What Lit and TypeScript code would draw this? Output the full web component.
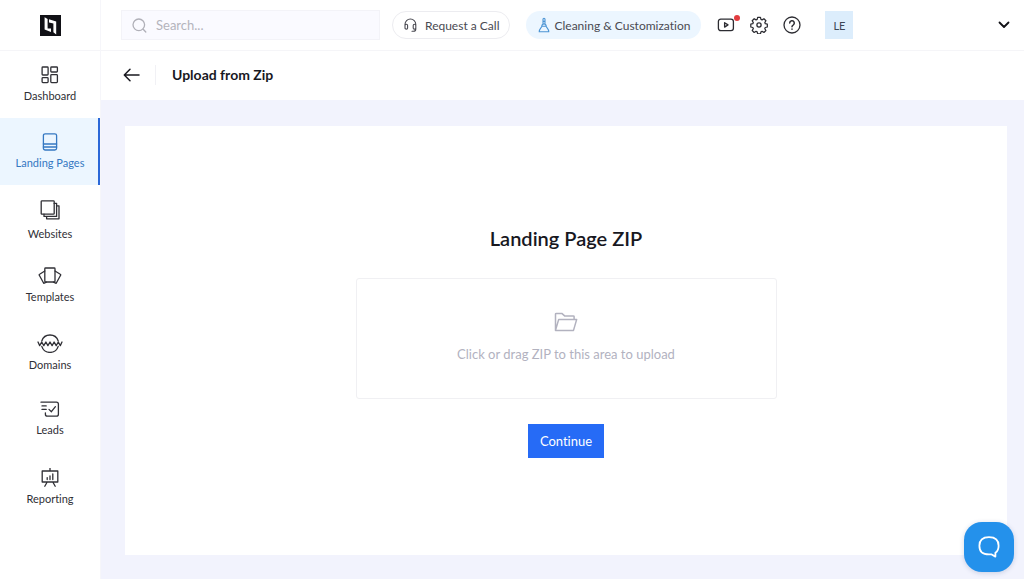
import { LitElement, html, css, svg, TemplateResult, SVGTemplateResult } from "lit";
import { customElement, property, state } from "lit/decorators.js";
import { classMap } from "lit/directives/class-map.js";

interface NavItem {
  label: string;
  width: number;
  height: number;
  art: SVGTemplateResult;
}

const NAV: NavItem[] = [
  {
    label: "Dashboard", width: 18, height: 18,
    art: svg`<rect x="1.1" y="1" width="6" height="8" rx="0.8"/><rect x="9.8" y="1" width="6.6" height="5" rx="0.8"/>
      <rect x="1.1" y="11.6" width="6" height="5" rx="0.8"/><rect x="9.8" y="8.6" width="6.6" height="8" rx="0.8"/>`,
  },
  {
    label: "Landing Pages", width: 16, height: 18,
    art: svg`<rect x="1.4" y="0.8" width="13.2" height="16.2" rx="1.8"/><path d="M1.4 11h13.2M1.4 14h13.2"/>`,
  },
  {
    label: "Websites", width: 20, height: 22,
    art: svg`<rect x="1.2" y="0.8" width="13" height="13.4" rx="0.8"/><path d="M14.2 3.4h2.4v13H4V14.2M16.6 5.8H19v13H6.6v-2.4"/>`,
  },
  {
    label: "Templates", width: 24, height: 18,
    art: svg`<rect x="6.8" y="1" width="10.2" height="14" rx="0.8"/>
      <path d="M6.8 4L1.6 7.2a.8.8 0 0 0-.3 1.1l4.4 8 2.7-1.2M17 4l5.3 3.2a.8.8 0 0 1 .3 1.1l-4.4 8-2.7-1.2"/>`,
  },
  {
    label: "Domains", width: 26, height: 19,
    art: svg`<path d="M4.800 7a8.600 8.600 0 0 1 16.400 0M4.800 12.400a8.600 8.600 0 0 0 16.400 0"/>
      <path d="M1 8l1.700 3.600L4.700 8l2.100 3.600L8.900 8l2 3.600L13 8l2.100 3.600L17.100 8l2.100 3.600L21.300 8l2 3.600L25 8"/>`,
  },
  {
    label: "Leads", width: 20, height: 17,
    art: svg`<path d="M1 1.2h15.4a2 2 0 0 1 2 2v10a2 2 0 0 1-2 2H7.4a2 2 0 0 1-2-2v-1.4M2 4.9h4.2M2 8.4h4.2M9 8.4l2.4 2.3 4-5"/>`,
  },
  {
    label: "Reporting", width: 18, height: 19,
    art: svg`<path d="M9 0v3M1.2 3h15.6v11H1.2zM6.2 14l-2.4 4.2M11.8 14l2.4 4.2"/><path d="M6.2 11.5V9.6M9 11.5V8M11.8 11.5V6"/>`,
  },
];

const icon = (width: number, height: number, art: SVGTemplateResult): TemplateResult => html`
  <svg width=${width} height=${height} viewBox="0 0 ${width} ${height}" fill="none" stroke="currentColor"
    stroke-width="1.3" stroke-linecap="round" stroke-linejoin="round" aria-hidden="true">${art}</svg>`;

@customElement("side-nav")
export class SideNav extends LitElement {
  @property() active = "";

  static styles = css`
    :host { display: block; background: #fff; border-right: 1px solid #f6f6fa; }
    .brand { display: flex; align-items: center; justify-content: center; height: 50px; border-bottom: 1px solid #f5f5f8; }
    .item {
      display: flex; flex-direction: column; align-items: center; gap: 5px;
      box-sizing: border-box; height: 67px; padding-top: 15px;
      color: #303036; font-size: 11px; line-height: 14px; text-decoration: none;
    }
    .active { background: #ecf6ff; color: #3578c2; box-shadow: inset -2px 0 #2b68d8; }
    svg { display: block; flex: none; }
  `;

  render() {
    return html`
      <div class="brand">
        <svg width="21" height="21" viewBox="0 0 21 21" aria-hidden="true">
          <path fill="#111116" d="M0 0h21v21H0z"/>
          <path fill="#fff" d="M4.600 2.200L7.600 4v9.500h3.400V17L4.600 14.600z"/>
          <path fill="#fff" d="M9 4.200l7.200 2.300v12.900l-2.800-2.200V8.400L9 7.400z"/>
        </svg>
      </div>
      <nav aria-label="Main">
        ${NAV.map((n) => html`
          <a href="#" class=${classMap({ item: true, active: n.label === this.active })}>
            ${icon(n.width, n.height, n.art)}<span>${n.label}</span>
          </a>`)}
      </nav>`;
  }
}

@customElement("top-bar")
export class TopBar extends LitElement {
  static styles = css`
    :host { display: flex; align-items: center; height: 50px; padding: 0 14px 0 20px; background: #fff; border-bottom: 1px solid #f5f5f8; }
    button { font: inherit; color: inherit; border: 0; background: none; padding: 0; margin: 0; display: flex; align-items: center; justify-content: center; cursor: pointer; }
    svg { display: block; flex: none; }
    .search {
      display: flex; align-items: center; gap: 9px; flex: 0 1 259px; min-width: 0; box-sizing: border-box;
      height: 30px; padding: 0 10px; background: #fafaff; border: 1px solid #f3f3f8; color: #b0b0b8;
    }
    .search input { flex: 1; min-width: 0; border: 0; padding: 0; outline: 0; background: none; font: inherit; font-size: 13px; color: #303036; }
    .search input::placeholder { color: #b4b4bc; opacity: 1; }
    .pill { height: 28px; box-sizing: border-box; border-radius: 14px; font-size: 12px; color: #4a4a52; white-space: nowrap; }
    .call { gap: 8px; padding: 0 10px 0 11px; margin-left: 12px; border: 1px solid #ececf0; }
    .clean { gap: 4px; padding: 0 11px 0 12px; margin-left: 16px; background: #ecf6ff; }
    .clean svg { color: #4b94d4; }
    .tools { display: flex; align-items: center; gap: 15px; margin-left: 16px; color: #2c2c32; }
    .video { position: relative; }
    .dot { position: absolute; top: -3px; right: -5px; width: 6px; height: 6px; border-radius: 50%; background: #e23c3f; }
    .avatar { width: 28px; height: 28px; margin-left: 24px; background: #dcedfc; color: #3c4654; font-size: 11px; }
    .more { margin-left: auto; color: #111116; }
  `;

  render() {
    return html`
      <label class="search">
        ${icon(15, 15, svg`<circle cx="6.8" cy="6.8" r="5.8"/><path d="M11.2 11.2l2.6 2.8"/>`)}
        <input type="search" placeholder="Search..." aria-label="Search" />
      </label>
      <button class="pill call">
        ${icon(13, 14, svg`<path stroke-width="1.1" d="M1 8V6.400a5.400 5.400 0 0 1 10.800 0V8M1 7.500c0-.8.6-1.200 1.400-1.200.8 0 1.200.4 1.200 1.200v2.400c0 .8-.4 1.200-1.200 1.200C1.600 11.100 1 10.600 1 9.900zM9.200 7.500c0-.8.4-1.200 1.200-1.200s1.400.4 1.400 1.200v2.400c0 .7-.6 1.200-1.400 1.200s-1.200-.4-1.200-1.200zM11.800 10v.9c0 1.600-.8 2.300-2.400 2.300H8"/>`)}
        Request a Call
      </button>
      <button class="pill clean">
        ${icon(12, 16, svg`<path stroke-width="1.1" d="M5 7V2.200a1 1 0 0 1 2 0V7M5 4.400h2M3.800 9.200C3.800 7.600 4.400 7 6 7s2.200.6 2.200 2.200M3.800 9.200h4.400M3.800 9.200c-.2 1.600-2.300 2.200-2.600 5.500h9.600c-.3-3.300-2.400-3.900-2.600-5.500"/>`)}
        Cleaning &amp; Customization
      </button>
      <div class="tools">
        <button class="video" aria-label="Video tutorials">
          ${icon(18, 14, svg`<rect x="1.4" y="1.1" width="15" height="11.6" rx="2.4"/><path d="M7.6 4.7v4.4L11 6.9z"/>`)}
          <span class="dot"></span>
        </button>
        <button aria-label="Settings">
          ${icon(18, 18, svg`<circle cx="9" cy="9" r="2.1"/>
            <path d="M7.500 1.200h3l.5 2.200 1.200.5 2-1.200 2.100 2.100-1.200 2 .5 1.200 2.200.5v3l-2.200.5-.5 1.200 1.200 2-2.100 2.100-2-1.200-1.200.5-.5 2.200h-3L7 16.600l-1.200-.5-2 1.200-2.100-2.100 1.200-2-.5-1.200-2.200-.5v-3l2.200-.5.5-1.200-1.200-2 2.100-2.100 2 1.200L7 3.400z" transform="translate(.6 .2) scale(.94)"/>`)}
        </button>
        <button aria-label="Help">
          ${icon(18, 18, svg`<circle cx="9" cy="9" r="8"/><path stroke-width="1.5" d="M6.700 7.100a2.300 2.300 0 1 1 3.400 2c-.8.4-1.100.8-1.100 1.600M9 13.100v.1"/>`)}
        </button>
      </div>
      <button class="avatar" aria-label="Account LE">LE</button>
      <button class="more" aria-label="More">
        ${icon(12, 8, svg`<path stroke-width="1.8" d="M1.500 1.500L6 6l4.500-4.500"/>`)}
      </button>`;
  }
}

@customElement("app-root")
export class AppRoot extends LitElement {
  @state() private fileName = "";

  static styles = css`
    :host {
      display: grid; grid-template-columns: 101px minmax(0, 1fr); min-height: 100vh;
      background: #f2f3fd; font-family: Lato, "Liberation Sans", sans-serif; color: #18181f;
      font-variant-ligatures: none;
    }
    side-nav { box-sizing: border-box; }
    .page { display: flex; flex-direction: column; min-width: 0; }
    .title { display: flex; align-items: center; box-sizing: border-box; height: 49px; padding: 0 22px 2px; background: #fff; }
    .back { display: flex; border: 0; padding: 0; background: none; color: #18181f; cursor: pointer; }
    .title h1 { margin: 0 0 0 15px; padding-left: 16px; border-left: 1px solid #f1f1f5; font-size: 14px; line-height: 20px; font-weight: 700; }
    main {
      flex: 1; display: flex; flex-direction: column; align-items: center; justify-content: center;
      margin: 26px 17px 24px 24px; padding: 20px; background: #fff;
    }
    h2 { margin: 0; font-size: 20px; line-height: 28px; font-weight: 600; }
    .drop {
      display: flex; flex-direction: column; align-items: center; justify-content: center; gap: 12px;
      box-sizing: border-box; width: 100%; max-width: 421px; height: 121px; margin: 26px 0 25px;
      border: 1px solid #f0f0f3; border-radius: 3px; color: #b2b2bf; font-size: 13px; line-height: 20px; cursor: pointer;
    }
    .file { position: absolute; width: 1px; height: 1px; opacity: 0; }
    .go { height: 34px; padding: 0 12px; border: 0; background: #266bf6; color: #fff; font: inherit; font-size: 13px; cursor: pointer; }
    .chat {
      position: fixed; right: 10px; bottom: 7px; width: 50px; height: 50px; padding: 0;
      display: flex; align-items: center; justify-content: center;
      border: 0; border-radius: 18px; background: #2491eb; color: #fff; cursor: pointer;
      box-shadow: 0 1px 5px rgba(30, 60, 120, 0.2);
    }
  `;

  private pick(e: Event) {
    this.fileName = (e.target as HTMLInputElement).files?.[0]?.name ?? "";
  }

  render() {
    return html`
      <side-nav active="Landing Pages"></side-nav>
      <div class="page">
        <top-bar></top-bar>
        <div class="title">
          <button class="back" aria-label="Back">
            ${icon(17, 14, svg`<path stroke-width="1.5" d="M16 7H1.500M7 1.300L1.300 7 7 12.700"/>`)}
          </button>
          <h1>Upload from Zip</h1>
        </div>
        <main>
          <h2>Landing Page ZIP</h2>
          <label class="drop">
            <input class="file" type="file" accept=".zip" @change=${this.pick} />
            ${icon(24, 20, svg`<path stroke-width="1.5" d="M1.500 18.400V2.200a.8.8 0 0 1 .8-.8h5.500l2.800 2.500h8.700a.8.8 0 0 1 .8.8v2.700M1.500 18.400L4.700 7.400h18l-3.200 11z"/>`)}
            <span>${this.fileName || "Click or drag ZIP to this area to upload"}</span>
          </label>
          <button class="go">Continue</button>
        </main>
      </div>
      <button class="chat" aria-label="Open chat">
        ${icon(24, 24, svg`<path stroke-width="1.800" d="M12 2.200c6.600 0 9.600 2.600 9.600 8.600 0 3.300-1 5.600-3.200 7v3.800l-4.200-2.300c-.7.100-1.400.1-2.200.1-6.600 0-9.600-2.600-9.600-8.600S5.400 2.200 12 2.200z"/>`)}
      </button>`;
  }
}
